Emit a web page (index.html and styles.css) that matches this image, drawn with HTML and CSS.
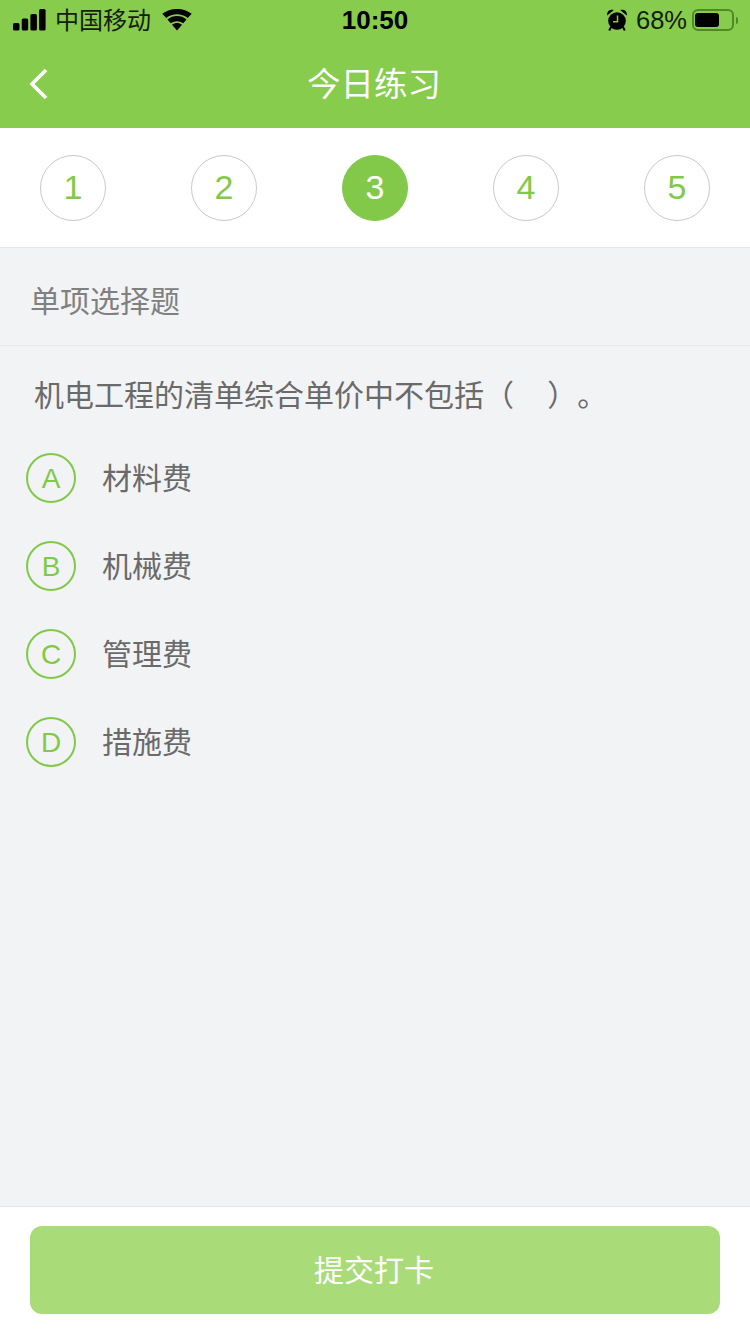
FILE: index.html
```html
<!DOCTYPE html>
<html lang="zh-CN">
<head>
    <meta charset="UTF-8">
    <meta name="viewport" content="width=device-width, initial-scale=1.0">
    <title>今日练习</title>
    <link rel="stylesheet" href="styles.css">
</head>

<body>
    <div class="page">
        <div class="header">
            <div class="status">
                <div class="status-left">
                    <svg class="signal" width="33" height="22" viewBox="0 0 33 22">
                        <rect x="0" y="14" width="6.500" height="7.500" rx="1.500"/>
                        <rect x="8.700" y="9.500" width="6.500" height="12" rx="1.500"/>
                        <rect x="17.400" y="5" width="6.500" height="16.500" rx="1.500"/>
                        <rect x="26.100" y="0" width="6.500" height="21.500" rx="1.500"/>
                    </svg>
                    <span class="carrier">中国移动</span>
                    <svg class="wifi" width="30" height="22" viewBox="0 0 30 22">
                        <path d="M15 21.500 10 15.800C12.900 13.500 17.100 13.500 20 15.800Z"/>
                        <path d="M8.800 14.300 5.400 10.500C10.900 5.900 19.100 5.900 24.600 10.500L21.200 14.300C17.500 11.400 12.500 11.400 8.800 14.300Z"/>
                        <path d="M4.200 9 .3 4.800C8.700-1.700 21.300-1.700 29.700 4.800L25.800 9C19.500 4 10.500 4 4.200 9Z"/>
                    </svg>
                </div>
                <div class="time">10:50</div>
                <div class="status-right">
                    <svg class="alarm" width="20" height="22" viewBox="0 0 20 22">
                        <circle cx="10" cy="12" r="8.800"/>
                        <path d="M.3 6.500C-.6 2.800 2.500-.5 6.800 1Z"/>
                        <path d="M19.700 6.500C20.600 2.800 17.500-.5 13.200 1Z"/>
                        <path d="M4 18 2.200 21.500M16 18 17.800 21.500" stroke="#000" stroke-width="2"/>
                        <path d="M10.500 6.500V12.800H6" fill="none" stroke="#87cc4c" stroke-width="1.500"/>
                    </svg>
                    <span class="percent">68%</span>
                    <div class="battery"><div class="battery-level"></div></div>
                    <div class="battery-cap"></div>
                </div>
            </div>
            <div class="nav">
                <svg class="back" width="20" height="32" viewBox="0 0 20 32">
                    <path d="M17 2 3 16 17 30" fill="none" stroke="#fff" stroke-width="3.600"/>
                </svg>
                <div class="nav-title">今日练习</div>
            </div>
        </div>

        <div class="steps">
            <div class="step">1</div>
            <div class="step">2</div>
            <div class="step active">3</div>
            <div class="step">4</div>
            <div class="step">5</div>
        </div>

        <div class="main">
            <div class="type">单项选择题</div>
            <div class="question">机电工程的清单综合单价中不包括（&nbsp;&nbsp;&nbsp;&nbsp;）。</div>
            <div class="options">
                <div class="option"><span class="letter">A</span><span class="option-text">材料费</span></div>
                <div class="option"><span class="letter">B</span><span class="option-text">机械费</span></div>
                <div class="option"><span class="letter">C</span><span class="option-text">管理费</span></div>
                <div class="option"><span class="letter">D</span><span class="option-text">措施费</span></div>
            </div>
        </div>

        <div class="footer">
            <button class="submit">提交打卡</button>
        </div>
    </div>
</body>
</html>
```

FILE: styles.css
```css
body {
    margin: 0;
    font-family: "Liberation Sans", "Noto Sans CJK SC", sans-serif;
    background-color: #f2f3f5;
}
.page {
    display: flex;
    flex-direction: column;
    height: 1334px;
    overflow: hidden;
}
.header {
    background-color: #87cc4c;
    height: 128px;
    flex-shrink: 0;
}
.status {
    display: grid;
    grid-template-columns: 1fr auto 1fr;
    align-items: center;
    height: 40px;
    color: #000;
}
.status svg {
    fill: #000;
    display: block;
}
.status-left {
    display: flex;
    align-items: center;
    padding-left: 13px;
}
.carrier {
    font-size: 24px;
    margin-left: 9px;
    padding-bottom: 4px;
    color: #14200a;
}
.wifi {
    margin-left: 11px;
}
.time {
    font-size: 26px;
    font-weight: bold;
}
.status-right {
    display: flex;
    align-items: center;
    justify-content: flex-end;
    padding-right: 12px;
}
.percent {
    font-size: 25.500px;
    margin-left: 9px;
    margin-right: 5px;
    color: #14200a;
}
.battery {
    width: 42px;
    height: 22px;
    box-sizing: border-box;
    padding: 2px 2px 2px 1px;
    border: 2px solid #4f8a26;
    border-radius: 6px;
}
.battery-level {
    width: 24px;
    height: 14px;
    background-color: #000;
    border-radius: 3px;
}
.battery-cap {
    width: 2px;
    height: 7px;
    margin-left: 2px;
    background-color: #4f8a26;
    border-radius: 0 2px 2px 0;
}
.nav {
    position: relative;
    display: flex;
    align-items: center;
    justify-content: center;
    height: 88px;
}
.back {
    position: absolute;
    left: 29px;
    top: 28px;
}
.nav-title {
    color: #fff;
    font-size: 33.500px;
    padding: 0 2px 6px 0;
}
.steps {
    display: flex;
    justify-content: space-between;
    align-items: center;
    height: 119px;
    padding: 0 40px;
    background-color: #fff;
    border-bottom: 1px solid #e4e5e7;
    flex-shrink: 0;
}
.step {
    display: flex;
    align-items: center;
    justify-content: center;
    width: 66px;
    height: 66px;
    box-sizing: border-box;
    border: 1px solid #c9c9c9;
    border-radius: 50%;
    color: #82c94a;
    font-size: 34px;
}
.step.active {
    background-color: #82c94a;
    border-color: #82c94a;
    color: #fff;
}
.main {
    flex: 1;
}
.type {
    height: 97px;
    line-height: 108px;
    padding-left: 30px;
    font-size: 30px;
    color: #808080;
    border-bottom: 1px solid #e7e8ea;
}
.question {
    padding: 30px 0 0 34px;
    height: 38px;
    line-height: 40px;
    font-size: 30px;
    color: #6a6a6a;
    text-spacing-trim: space-all;
}
.options {
    padding: 20px 0 0 26px;
}
.option {
    display: flex;
    align-items: center;
    height: 88px;
    font-size: 30px;
    color: #6a6a6a;
}
.option-text {
    padding-bottom: 4px;
}
.letter {
    display: flex;
    align-items: center;
    justify-content: center;
    width: 50px;
    height: 50px;
    box-sizing: border-box;
    margin-right: 26px;
    padding-top: 2px;
    border: 2px solid #82c94a;
    border-radius: 50%;
    color: #82c94a;
    font-size: 28px;
}
.footer {
    height: 128px;
    box-sizing: border-box;
    padding: 19px 30px 0;
    background-color: #fff;
    border-top: 1px solid #e4e5e7;
    flex-shrink: 0;
}
.submit {
    display: block;
    width: 100%;
    height: 88px;
    padding: 0 2px 4px 0;
    border: none;
    border-radius: 12px;
    background-color: #a9dc78;
    color: #fff;
    font-family: inherit;
    font-size: 30px;
}
```
